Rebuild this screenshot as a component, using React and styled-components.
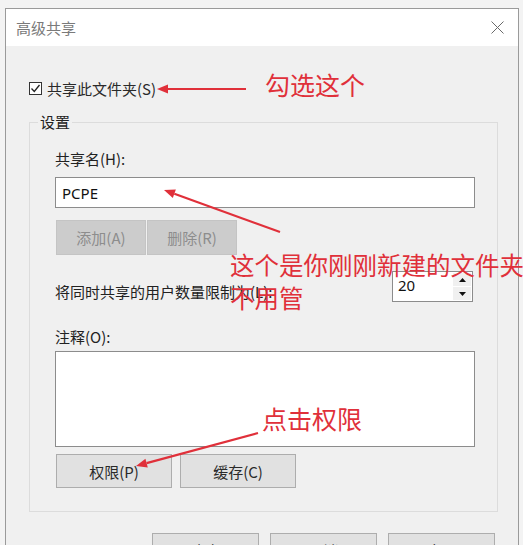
import React from "react";
import styled, { createGlobalStyle } from "styled-components";

const GlobalStyle = createGlobalStyle`
  html, body {
    margin: 0;
    padding: 0;
    background: #f3f3f3;
    overflow: hidden;
  }
  body {
    font-family: "Noto Sans CJK SC", "Noto Sans", sans-serif;
  }
`;

const RED = "#e0303a";

const Page = styled.div`
  position: relative;
  width: 523px;
  height: 545px;
  overflow: hidden;
  padding-top: 8px;
  padding-left: 5px;
  box-sizing: border-box;
`;

const Window = styled.div`
  width: 514px;
  height: 560px;
  box-sizing: border-box;
  border: 1px solid #9a9a9a;
  background: #f0f0f0;
  display: flex;
  flex-direction: column;
`;

const TitleBar = styled.div`
  height: 38px;
  background: #fff;
  display: flex;
  align-items: center;
  justify-content: space-between;
  padding: 0 14px 0 10px;
`;

const Title = styled.span`
  font-size: 15px;
  color: #7a7a7a;
  line-height: 20px;
`;

const Body = styled.div`
  padding: 32px 0 0 23px;
  display: flex;
  flex-direction: column;
`;

const CheckRow = styled.label`
  display: flex;
  align-items: center;
  height: 20px;
  gap: 5px;
  font-size: 15px;
  color: #2a2a2a;
`;

const Box = styled.span`
  width: 13px;
  height: 13px;
  box-sizing: border-box;
  border: 1px solid #333;
  background: #fff;
  display: flex;
  align-items: center;
  justify-content: center;
`;

const Group = styled.fieldset`
  margin: 16px 0 0;
  width: 469px;
  box-sizing: border-box;
  border: 1px solid #dcdcdc;
  padding: 19px 22px 23px 8px;
  min-width: 0;
`;

const Legend = styled.legend`
  font-size: 15px;
  line-height: 16px;
  padding: 0 2px;
  color: #222;
`;

const GroupInner = styled.div`
  padding-left: 17px;
  display: flex;
  flex-direction: column;
`;

const Label = styled.div`
  font-size: 15px;
  line-height: 20px;
  color: #222;
  margin-top: ${(p) => p.$top || 0}px;
`;

const TextBox = styled.div`
  margin-top: ${(p) => p.$top || 0}px;
  height: ${(p) => p.$height}px;
  box-sizing: border-box;
  border: 1px solid #8c8c8c;
  background: #fff;
  font-family: "Noto Sans", "Open Sans", sans-serif;
  font-size: 15px;
  color: #111;
  padding: 0 6px;
  display: flex;
  align-items: center;
`;

const ButtonRow = styled.div`
  display: flex;
  gap: ${(p) => p.$gap}px;
  margin-top: ${(p) => p.$top}px;
  padding-left: 1px;
`;

const Button = styled.div`
  width: ${(p) => p.$width}px;
  height: ${(p) => p.$height}px;
  box-sizing: border-box;
  border: 1px solid ${(p) => (p.$disabled ? "#c4c4c4" : "#adadad")};
  background: ${(p) => (p.$disabled ? "#cccccc" : "#e1e1e1")};
  color: ${(p) => (p.$disabled ? "#8d8d8d" : "#2a2a2a")};
  font-size: 15px;
  display: flex;
  align-items: center;
  justify-content: center;
`;

const LimitRow = styled.div`
  margin-top: 16px;
  display: flex;
  align-items: flex-end;
  justify-content: space-between;
  padding-right: 2px;
`;

const Spin = styled.div`
  width: 81px;
  height: 31px;
  box-sizing: border-box;
  border: 1px solid #8c8c8c;
  background: #fff;
  display: flex;
  justify-content: space-between;
`;

const SpinValue = styled.span`
  font-family: "Noto Sans", sans-serif;
  font-size: 15px;
  color: #111;
  padding: 3px 0 0 5px;
`;

const SpinButtons = styled.div`
  width: 18px;
  display: flex;
  flex-direction: column;
  gap: 1px;
  padding: 1px;
`;

const SpinButton = styled.div`
  flex: 1;
  background: #f0f0f0;
  display: flex;
  align-items: center;
  justify-content: center;
`;

const Footer = styled.div`
  margin-top: 21px;
  display: flex;
  gap: 11px;
  padding-left: 123px;
`;

const Note = styled.div`
  position: absolute;
  left: ${(p) => p.$x}px;
  top: ${(p) => p.$y}px;
  color: ${RED};
  font-size: ${(p) => p.$size || 25}px;
  line-height: ${(p) => p.$lh || 25}px;
  white-space: nowrap;
`;

const Arrows = styled.svg`
  position: absolute;
  left: 0;
  top: 0;
  pointer-events: none;
`;

function Arrow({ x1, y1, x2, y2 }) {
  const a = Math.atan2(y2 - y1, x2 - x1);
  const len = 11;
  const w = 4.5;
  const bx = x2 - len * Math.cos(a);
  const by = y2 - len * Math.sin(a);
  const px = -Math.sin(a) * w;
  const py = Math.cos(a) * w;
  return (
    <g>
      <line x1={x1} y1={y1} x2={bx} y2={by} stroke={RED} strokeWidth="2.2" />
      <polygon
        points={`${x2},${y2} ${bx + px},${by + py} ${bx - px},${by - py}`}
        fill={RED}
      />
    </g>
  );
}

export default function App() {
  return (
    <>
      <GlobalStyle />
      <Page>
        <Window>
          <TitleBar>
            <Title>高级共享</Title>
            <svg width="13" height="13" viewBox="0 0 13 13">
              <path d="M0.5 0.5 L12.5 12.5 M12.5 0.5 L0.5 12.5" stroke="#6a6a6a" strokeWidth="1" />
            </svg>
          </TitleBar>
          <Body>
            <CheckRow>
              <Box>
                <svg width="11" height="11" viewBox="0 0 11 11">
                  <path d="M1.5 5.5 L4.3 8.5 L9.5 2" fill="none" stroke="#222" strokeWidth="1.3" />
                </svg>
              </Box>
              共享此文件夹(S)
            </CheckRow>
            <Group>
              <Legend>设置</Legend>
              <GroupInner>
                <Label>共享名(H):</Label>
                <TextBox $top={8} $height={31}>PCPE</TextBox>
                <ButtonRow $gap={1} $top={12}>
                  <Button $width={90} $height={35} $disabled>添加(A)</Button>
                  <Button $width={90} $height={35} $disabled>删除(R)</Button>
                </ButtonRow>
                <LimitRow>
                  <Label>将同时共享的用户数量限制为(L):</Label>
                  <Spin>
                    <SpinValue>20</SpinValue>
                    <SpinButtons>
                      <SpinButton>
                        <svg width="7" height="4" viewBox="0 0 7 4"><polygon points="3.5,0 7,4 0,4" fill="#111" /></svg>
                      </SpinButton>
                      <SpinButton>
                        <svg width="7" height="4" viewBox="0 0 7 4"><polygon points="0,0 7,0 3.5,4" fill="#111" /></svg>
                      </SpinButton>
                    </SpinButtons>
                  </Spin>
                </LimitRow>
                <Label $top={25}>注释(O):</Label>
                <TextBox $top={4} $height={96} />
                <ButtonRow $gap={8} $top={7}>
                  <Button $width={116} $height={34}>权限(P)</Button>
                  <Button $width={116} $height={34}>缓存(C)</Button>
                </ButtonRow>
              </GroupInner>
            </Group>
            <Footer>
              <Button $width={107} $height={34}>确定</Button>
              <Button $width={107} $height={34}>取消</Button>
              <Button $width={107} $height={34}>应用</Button>
            </Footer>
          </Body>
        </Window>

        <Note $x={265} $y={72}>勾选这个</Note>
        <Note $x={230} $y={248} $lh={33} $size={24.5}>
          这个是你刚刚新建的文件夹
          <br />
          不用管
        </Note>
        <Note $x={262} $y={406}>点击权限</Note>

        <Arrows width="523" height="545" viewBox="0 0 523 545">
          <Arrow x1={246} y1={89} x2={157} y2={89} />
          <Arrow x1={280} y1={232} x2={164} y2={190} />
          <Arrow x1={258} y1={433} x2={136} y2={466} />
        </Arrows>
      </Page>
    </>
  );
}
